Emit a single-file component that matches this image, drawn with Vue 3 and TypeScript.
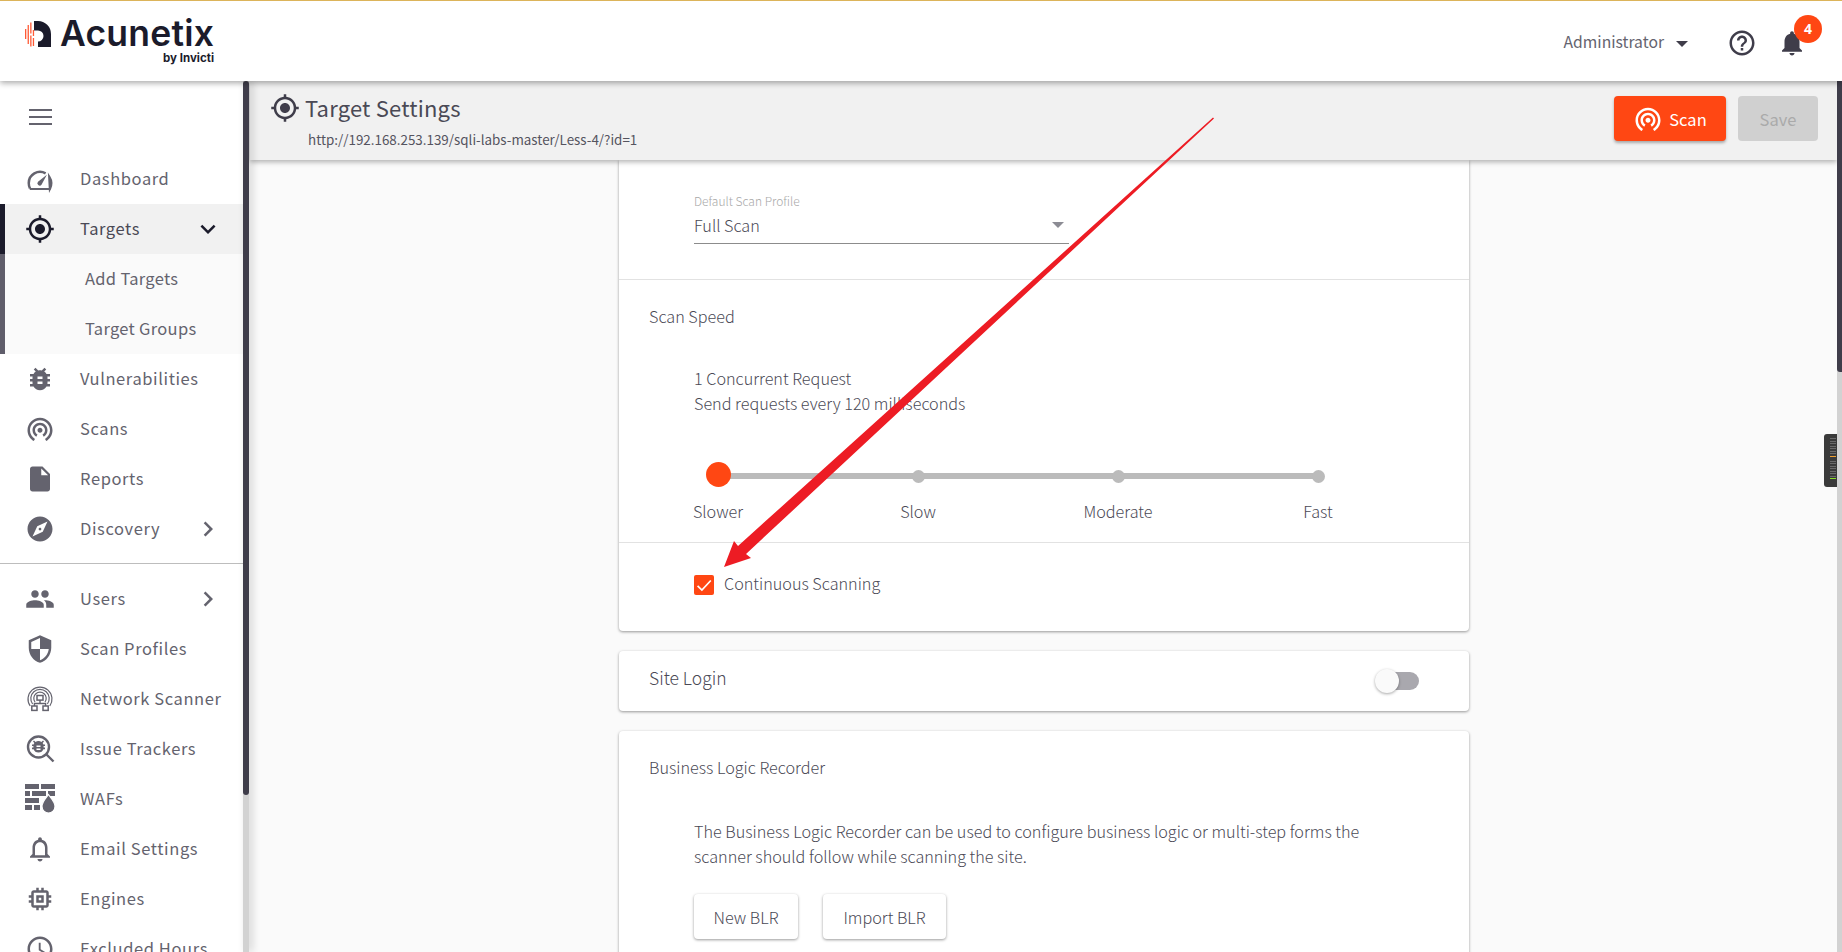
<script setup lang="ts">
interface NavItem { label: string; d?: string; custom?: string; chevron?: boolean }
const top: NavItem[] = [
  { label: 'Vulnerabilities', d: 'M14,12H10V10H14M14,16H10V14H14M20,8H17.19C16.74,7.22 16.12,6.55 15.37,6.04L17,4.41L15.59,3L13.42,5.17C12.96,5.06 12.5,5 12,5C11.5,5 11.04,5.06 10.59,5.17L8.41,3L7,4.41L8.62,6.04C7.88,6.55 7.26,7.22 6.81,8H4V10H6.09C6.04,10.33 6,10.66 6,11V12H4V14H6V15C6,15.34 6.04,15.67 6.09,16H4V18H6.81C7.85,19.79 9.78,21 12,21C14.22,21 16.15,19.79 17.19,18H20V16H17.91C17.96,15.67 18,15.34 18,15V14H20V12H18V11C18,10.66 17.96,10.33 17.91,10H20V8Z' },
  { label: 'Scans', d: 'M12 11c-1.1 0-2 .9-2 2s.9 2 2 2 2-.9 2-2-.9-2-2-2zm6 2c0-3.31-2.69-6-6-6s-6 2.69-6 6c0 2.22 1.21 4.15 3 5.19l1-1.74c-1.19-.7-2-1.97-2-3.45 0-2.21 1.79-4 4-4s4 1.79 4 4c0 1.48-.81 2.75-2 3.45l1 1.74c1.79-1.04 3-2.97 3-5.19zM12 3C6.48 3 2 7.48 2 13c0 3.7 2.01 6.92 4.99 8.65l1-1.73C5.61 18.53 4 15.96 4 13c0-4.42 3.58-8 8-8s8 3.58 8 8c0 2.96-1.61 5.53-4 6.92l1 1.73c2.99-1.73 5-4.95 5-8.65 0-5.52-4.48-10-10-10z' },
  { label: 'Reports', d: 'M6 2c-1.1 0-1.99.9-1.99 2L4 20c0 1.1.89 2 1.99 2H18c1.1 0 2-.9 2-2V8l-6-6H6zm7 7V3.5L18.5 9H13z' },
  { label: 'Discovery', chevron: true, d: 'M12 10.9c-.61 0-1.1.49-1.1 1.1s.49 1.1 1.1 1.1c.61 0 1.1-.49 1.1-1.1s-.49-1.1-1.1-1.1zM12 2C6.48 2 2 6.48 2 12s4.48 10 10 10 10-4.48 10-10S17.52 2 12 2zm2.19 12.19L6 18l3.81-8.19L18 6l-3.81 8.19z' }
]
const bottom: NavItem[] = [
  { label: 'Users', chevron: true, d: 'M16 11c1.66 0 2.99-1.34 2.99-3S17.66 5 16 5c-1.66 0-3 1.34-3 3s1.34 3 3 3zm-8 0c1.66 0 2.99-1.34 2.99-3S9.66 5 8 5C6.34 5 5 6.34 5 8s1.34 3 3 3zm0 2c-2.33 0-7 1.17-7 3.5V19h14v-2.5c0-2.33-4.67-3.5-7-3.5zm8 0c-.29 0-.62.02-.97.05 1.16.84 1.97 1.97 1.97 3.45V19h6v-2.5c0-2.33-4.67-3.5-7-3.5z' },
  { label: 'Scan Profiles', d: 'M12 1L3 5v6c0 5.55 3.84 10.74 9 12 5.16-1.26 9-6.45 9-12V5l-9-4zm0 10.99h7c-.53 4.12-3.28 7.79-7 8.94V12H5V6.3l7-3.11v8.8z' },
  { label: 'Network Scanner', custom: 'network' },
  { label: 'Issue Trackers', custom: 'issue' },
  { label: 'WAFs', custom: 'waf' },
  { label: 'Email Settings', d: 'M12 22c1.1 0 2-.9 2-2h-4c0 1.1.9 2 2 2zm6-6v-5c0-3.07-1.63-5.64-4.5-6.32V4c0-.83-.67-1.5-1.5-1.5s-1.5.67-1.5 1.5v.68C7.64 5.36 6 7.92 6 11v5l-2 2v1h16v-1l-2-2zm-2 1H8v-6c0-2.48 1.51-4.5 4-4.5s4 2.02 4 4.5v6z' },
  { label: 'Engines', d: 'M15 9H9v6h6V9zm-2 4h-2v-2h2v2zm8-2V9h-2V7c0-1.1-.9-2-2-2h-2V3h-2v2h-2V3H9v2H7c-1.1 0-2 .9-2 2v2H3v2h2v2H3v2h2v2c0 1.1.9 2 2 2h2v2h2v-2h2v2h2v-2h2c1.1 0 2-.9 2-2v-2h2v-2h-2v-2h2zm-4 6H7V7h10v10z' },
  { label: 'Excluded Hours', d: 'M11.99 2C6.47 2 2 6.48 2 12s4.47 10 9.99 10C17.52 22 22 17.52 22 12S17.52 2 11.99 2zM12 20c-4.42 0-8-3.58-8-8s3.58-8 8-8 8 3.58 8 8-3.58 8-8 8zm.5-13H11v6l5.25 3.15.75-1.23-4.5-2.67z' }
]
const gps = 'M12 8c-2.21 0-4 1.79-4 4s1.79 4 4 4 4-1.79 4-4-1.79-4-4-4zm8.94 3c-.46-4.17-3.77-7.48-7.94-7.94V1h-2v2.06C6.83 3.52 3.52 6.83 3.06 11H1v2h2.06c.46 4.17 3.77 7.48 7.94 7.94V23h2v-2.06c4.17-.46 7.48-3.77 7.94-7.94H23v-2h-2.06zM12 19c-3.87 0-7-3.13-7-7s3.13-7 7-7 7 3.13 7 7-3.13 7-7 7z'
const tether = top[1].d as string
const chevRight = 'M8.59 16.59L13.17 12 8.59 7.41 10 6l6 6-6 6z'
const chevDown = 'M7.41 8.59L12 13.17l4.59-4.58L18 10l-6 6-6-6z'
const stops = ['Slower', 'Slow', 'Moderate', 'Fast']
const meterTicks = 7
</script>

<template>
  <div class="app">
    <header class="header">
      <div class="logo">
        <svg class="logo-mark" viewBox="25 21 26 26">
          <g fill="#ff5a36">
            <rect x="25" y="29" width="1.3" height="10" />
            <rect x="27.6" y="25" width="1.3" height="19" />
            <rect x="30.2" y="22.5" width="1.3" height="11" />
            <rect x="30.2" y="35.5" width="1.3" height="11" />
            <rect x="32.8" y="30" width="1.3" height="6" />
            <rect x="32.8" y="38" width="1.3" height="8" />
          </g>
          <path fill="#1b1b2b" d="M34 21H38a13 13 0 0 1 13 13V47H38V41.5a5.5 5.5 0 0 0 0-11H34z" />
        </svg>
        <div class="logo-text">
          <span class="logo-name">Acunetix</span>
          <span class="logo-by">by Invicti</span>
        </div>
      </div>
      <div class="header-right">
        <span class="admin">Administrator</span>
        <span class="caret"></span>
        <svg class="help" viewBox="0 0 24 24"><path d="M11 18h2v-2h-2v2zm1-16C6.48 2 2 6.48 2 12s4.48 10 10 10 10-4.48 10-10S17.52 2 12 2zm0 18c-4.41 0-8-3.59-8-8s3.59-8 8-8 8 3.59 8 8-3.59 8-8 8zm0-14c-2.21 0-4 1.79-4 4h2c0-1.1.9-2 2-2s2 .9 2 2c0 2-3 1.75-3 5h2c0-2.25 3-2.5 3-5 0-2.21-1.79-4-4-4z" /></svg>
        <div class="bell">
          <svg viewBox="0 0 24 24"><path d="M12 22c1.1 0 2-.9 2-2h-4c0 1.1.89 2 2 2zm6-6v-5c0-3.07-1.64-5.64-4.5-6.32V4c0-.83-.67-1.5-1.5-1.5s-1.5.67-1.5 1.5v.68C7.63 5.36 6 7.92 6 11v5l-2 2v1h16v-1l-2-2z" /></svg>
          <span class="badge">4</span>
        </div>
      </div>
    </header>

    <div class="body">
      <aside class="sidebar">
        <div class="burger"><span></span><span></span><span></span></div>
        <div class="row">
          <svg class="icon" viewBox="0 0 24 24">
            <path d="M4 19.5a9.2 9.2 0 0 1-1-4.2a9 9 0 0 1 13.5-7.8M19.5 10.5a9 9 0 0 1 1.5 4.8a9.2 9.2 0 0 1-1 4.2z" fill="none" stroke="#64636e" stroke-width="2" />
            <path d="M3.8 20h16.4" stroke="#64636e" stroke-width="1.6" />
            <path d="M10.4 14.2L17.5 8.6L13.2 16.6a1.7 1.7 0 1 1-2.8-2.4z" fill="#64636e" />
          </svg>
          <span>Dashboard</span>
        </div>
        <div class="row row-active">
          <svg class="icon" viewBox="0 0 24 24"><path :d="gps" /></svg>
          <span>Targets</span>
          <svg class="chev" viewBox="0 0 24 24"><path :d="chevDown" /></svg>
        </div>
        <div class="sub">Add Targets</div>
        <div class="sub">Target Groups</div>
        <div v-for="n in top" :key="n.label" class="row">
          <svg class="icon" viewBox="0 0 24 24"><path :d="n.d" /></svg>
          <span>{{ n.label }}</span>
          <svg v-if="n.chevron" class="chev" viewBox="0 0 24 24"><path :d="chevRight" /></svg>
        </div>
        <div class="nav-divider"></div>
        <div v-for="n in bottom" :key="n.label" class="row">
          <svg v-if="n.custom === 'network'" class="icon" viewBox="0 0 30 30" fill="none" stroke="#64636e">
            <path d="M5.2 22a12 12 0 1 1 19.6 0M7.6 20a9.2 9.2 0 1 1 14.8 0M10 18a6.2 6.2 0 1 1 10 0" stroke-width="1.2" />
            <rect x="12" y="11.5" width="6" height="4.6" fill="#fff" stroke-width="1.5" />
            <rect x="6.8" y="22" width="5.2" height="4.4" fill="#fff" stroke-width="1.5" />
            <rect x="18" y="22" width="5.2" height="4.4" fill="#fff" stroke-width="1.5" />
            <path d="M15 16v3.5M9.4 22v-2.5h11.2v2.5" stroke-width="1.4" />
          </svg>
          <svg v-else-if="n.custom === 'issue'" class="icon" viewBox="0 0 30 30" fill="none" stroke="#64636e">
            <circle cx="13.5" cy="13" r="10.5" stroke-width="2.4" />
            <path d="M21.5 20.5l7 7" stroke-width="2.4" />
            <path fill="#64636e" stroke="none" fill-rule="evenodd" d="M13.5 7c1.1 0 2.1.4 2.9 1l1.6-1.5 1 1-1.4 1.4c.4.6.7 1.1.8 1.6H20v1.6h-1.4v1.5H20v1.6h-1.6c-.6 2-2.5 3.3-4.9 3.3s-4.3-1.3-4.9-3.3H7v-1.6h1.4v-1.5H7v-1.6h1.6c.1-.5.4-1 .8-1.6L8 7.5l1-1L10.6 8c.8-.6 1.8-1 2.9-1zM11.5 11.5v1.5h4v-1.5zm0 3v1.5h4v-1.5z" />
          </svg>
          <svg v-else-if="n.custom === 'waf'" class="icon" viewBox="0 0 30 30" fill="#64636e">
            <rect x="0" y="0" width="14" height="5" />
            <rect x="16" y="0" width="14" height="5" />
            <rect x="0" y="7" width="5" height="5" />
            <rect x="7" y="7" width="14" height="5" />
            <rect x="23" y="7" width="7" height="5" />
            <rect x="0" y="14" width="14" height="5" />
            <rect x="0" y="21" width="7" height="5" />
            <rect x="9" y="21" width="6" height="5" />
            <path d="M23.5 10.5c2.4 3.6 6.5 7 6.5 12a6.5 6.5 0 0 1-13 0c0-5 4-8.400 6.500-12z" stroke="#fff" stroke-width="1.2" />
          </svg>
          <svg v-else class="icon" viewBox="0 0 24 24"><path :d="n.d" /></svg>
          <span>{{ n.label }}</span>
          <svg v-if="n.chevron" class="chev" viewBox="0 0 24 24"><path :d="chevRight" /></svg>
        </div>
      </aside>
      <div class="side-track"><div class="side-thumb"></div></div>

      <main class="main">
        <div class="pagebar">
          <div class="pagebar-title">
            <div class="title-line">
              <svg class="title-icon" viewBox="0 0 24 24"><path :d="gps" /></svg>
              <h1>Target Settings</h1>
            </div>
            <div class="url">http://192.168.253.139/sqli-labs-master/Less-4/?id=1</div>
          </div>
          <div class="actions">
            <button class="btn-scan">
              <svg viewBox="0 0 24 24"><path :d="tether" /></svg>
              <span>Scan</span>
            </button>
            <button class="btn-save">Save</button>
          </div>
        </div>

        <div class="content">
          <section class="card card-first">
            <div class="sec sec-profile">
              <div class="field-label">Default Scan Profile</div>
              <div class="select">
                <span>Full Scan</span>
                <span class="select-caret"></span>
              </div>
            </div>
            <div class="sec sec-speed">
              <div class="card-title">Scan Speed</div>
              <p class="speed-text">1 Concurrent Request<br />Send requests every 120 milliseconds</p>
              <div class="slider">
                <div v-for="(s, i) in stops" :key="s" class="stop">
                  <div class="stop-slot"><span :class="i === 0 ? 'knob' : 'dot'"></span></div>
                  <div class="stop-label">{{ s }}</div>
                </div>
              </div>
            </div>
            <div class="sec-check">
              <span class="checkbox">
                <svg viewBox="0 0 20 20"><path d="M3.6 10.8l4.3 4.3 8.900-9.600" fill="none" stroke="#fff" stroke-width="1.7" /></svg>
              </span>
              <span class="check-label">Continuous Scanning</span>
            </div>
          </section>

          <section class="card card-login">
            <div class="card-title">Site Login</div>
            <div class="toggle"><span class="toggle-knob"></span></div>
          </section>

          <section class="card card-blr">
            <div class="card-title">Business Logic Recorder</div>
            <p class="blr-text">The Business Logic Recorder can be used to configure business logic or multi-step forms the scanner should follow while scanning the site.</p>
            <div class="blr-buttons">
              <button class="btn-plain btn-new">New BLR</button>
              <button class="btn-plain btn-import">Import BLR</button>
            </div>
          </section>
        </div>
      </main>
      <div class="page-track"><div class="page-thumb"></div></div>
    </div>

    <div class="meter">
      <div class="meter-col">
        <span v-for="t in meterTicks" :key="'a' + t" class="tick"></span>
        <span class="tick tick-orange"></span>
      </div>
      <div class="meter-col">
        <span v-for="t in meterTicks" :key="'b' + t" class="tick"></span>
        <span class="tick tick-green"></span>
      </div>
    </div>

    <svg class="annotation" viewBox="0 0 1842 952">
      <polygon fill="#ed1c24" points="1213,117.500 1214,118.500 746,554 751,558 724,567 734,541 738,546" />
    </svg>
  </div>
</template>

<style>
html, body { margin: 0; padding: 0; overflow: hidden; }
</style>

<style scoped>
.app {
  position: relative;
  width: 1842px;
  height: 952px;
  overflow: hidden;
  background: #fafafa;
  font-family: "Noto Sans CJK SC", "Noto Sans", sans-serif;
  color: #4a4955;
}
svg { display: block; flex: none; }

.header {
  position: relative;
  z-index: 5;
  height: 80px;
  border-top: 1px solid #dcb45a;
  background: #fff;
  box-shadow: 0 2px 6px rgba(0, 0, 0, 0.35);
  display: flex;
  align-items: flex-start;
  justify-content: space-between;
}
.logo { display: flex; padding: 20px 0 0 25px; }
.logo-mark { width: 26px; height: 26px; }
.logo-text { display: flex; flex-direction: column; align-items: flex-end; margin-left: 9px; }
.logo-name {
  font-family: Inter, sans-serif;
  font-weight: 600;
  font-size: 35.5px;
  line-height: 26px;
  color: #1b1b2b;
  letter-spacing: 0.2px;
}
.logo-by {
  font-family: Inter, sans-serif;
  font-weight: 700;
  font-size: 11.5px;
  line-height: 14px;
  color: #1b1b2b;
  margin-top: 4px;
}
.header-right { display: flex; align-items: center; height: 84px; margin-top: -1px; }
.admin { font-size: 15.7px; line-height: 25px; color: #64636e; margin-top: -1px; }
.caret {
  width: 0; height: 0;
  border-left: 6.5px solid transparent;
  border-right: 6.5px solid transparent;
  border-top: 6px solid #3f3d4a;
  margin: 4px 0 0 12px;
}
.help { width: 30px; height: 30px; margin: 2px 0 0 39px; fill: #3f3d4a; }
.bell { position: relative; width: 30px; height: 30px; margin: 2px 35px 0 20px; fill: #3f3d4a; }
.bell svg { width: 30px; height: 30px; }
.badge {
  position: absolute;
  left: 17px;
  top: -13px;
  width: 28px;
  height: 28px;
  border-radius: 50%;
  background: #ff4713;
  color: #fff;
  font-size: 14px;
  font-weight: 700;
  font-family: "Noto Sans", sans-serif;
  line-height: 28px;
  text-align: center;
}

.body { display: flex; height: 871px; }
.sidebar { width: 243px; flex: none; background: #fff; overflow: hidden; }
.burger {
  height: 73px;
  box-sizing: border-box;
  padding: 28px 0 0 29px;
  display: flex;
  flex-direction: column;
  gap: 5px;
}
.burger span { width: 23px; height: 2px; background: #64636e; }
.row {
  height: 50px;
  display: flex;
  align-items: center;
  padding: 0 20px 0 25px;
  font-size: 16.5px;
  letter-spacing: 0.6px;
  color: #64636e;
  fill: #64636e;
}
.row > span { margin: -2px 0 0 25px; line-height: 25px; white-space: nowrap; }
.icon { width: 30px; height: 30px; }
.chev { width: 30px; height: 30px; margin-left: auto; }
.row-active {
  background: #f1f1f1;
  color: #4a4955;
  fill: #1b1b2b;
  box-shadow: inset 5px 0 0 #1b1b2b;
}
.sub {
  height: 50px;
  line-height: 48px;
  padding-left: 85px;
  background: #fafafa;
  font-size: 16.5px;
  letter-spacing: 0.3px;
  color: #64636e;
  box-shadow: inset 5px 0 0 #5f5d6a;
}
.nav-divider { height: 1px; background: #bdbdbd; margin: 9px 0 10px; }

.side-track {
  position: relative;
  z-index: 3;
  width: 6px;
  flex: none;
  background: #d2d2d2;
  box-shadow: 3px 0 8px rgba(0, 0, 0, 0.18);
}
.side-thumb { height: 714px; background: #3f3d4a; border-radius: 3px; }

.main { flex: 1; min-width: 0; overflow: hidden; display: flex; flex-direction: column; }
.pagebar {
  position: relative;
  z-index: 2;
  flex: none;
  height: 79px;
  margin-left: 1px;
  background: #f1f1f1;
  box-shadow: 0 2px 5px rgba(0, 0, 0, 0.3);
  display: flex;
  justify-content: space-between;
}
.pagebar-title { padding: 11px 0 0 20px; }
.title-line { display: flex; align-items: center; height: 30px; }
.title-icon { width: 30px; height: 30px; fill: #3f3d4a; margin-top: 1px; }
.pagebar h1 {
  margin: -1px 0 0 5px;
  font-size: 22px;
  font-weight: 400;
  line-height: 30px;
  color: #4a4955;
  letter-spacing: 0.2px;
}
.url { margin: 7px 0 0 38px; font-size: 13.4px; line-height: 20px; color: #55545f; }
.actions { display: flex; align-items: flex-start; gap: 12px; padding: 15px 19px 0 0; }
.btn-scan, .btn-save {
  height: 45px;
  border: 0;
  border-radius: 4px;
  font-family: inherit;
  font-size: 16.5px;
  padding: 0;
}
.btn-scan {
  width: 112px;
  background: #ff4713;
  color: #fff;
  fill: #fff;
  display: flex;
  align-items: center;
  justify-content: center;
  gap: 6px;
  box-shadow: 0 2px 3px rgba(0, 0, 0, 0.3);
}
.btn-scan svg { width: 30px; height: 30px; }
.btn-save { width: 80px; background: #d0d0d0; color: #aaa; }

.content { flex: 1; min-height: 0; overflow: hidden; padding-left: 370px; }
.card {
  width: 850px;
  background: #fff;
  border-radius: 4px;
  box-shadow: 0 1px 3px rgba(0, 0, 0, 0.4);
  margin-bottom: 20px;
  font-size: 16.2px;
  font-weight: 300;
  line-height: 25px;
  box-sizing: border-box;
}
.card-first { border-radius: 0 0 4px 4px; height: 471px; }
.card-title { padding-left: 30px; margin-top: -1px; }
.sec { border-bottom: 1px solid #e2e2e2; }
.sec-profile { padding-left: 75px; padding-top: 33px; height: 86px; }
.field-label { font-size: 12px; line-height: 16px; color: #a8a8a8; }
.select {
  width: 375px;
  height: 31px;
  box-sizing: border-box;
  margin-top: 4px;
  border-bottom: 1px solid #8c8c8c;
  display: flex;
  justify-content: space-between;
}
.select-caret {
  width: 0; height: 0;
  border-left: 6.5px solid transparent;
  border-right: 6.5px solid transparent;
  border-top: 6px solid #8c8c94;
  margin: 9px 5px 0 0;
}
.sec-speed { padding-top: 25px; height: 237px; }
.speed-text { margin: 37px 0 0 75px; }
.slider {
  width: 600px;
  margin: 48px 0 0 99px;
  display: flex;
  justify-content: space-between;
  background: linear-gradient(#bbb, #bbb) no-repeat 0 9px / 100% 6px;
}
.stop { width: 0; display: flex; flex-direction: column; align-items: center; }
.stop-slot { height: 25px; display: flex; align-items: center; justify-content: center; }
.dot { flex: none; width: 13px; height: 13px; border-radius: 50%; background: #bbb; }
.knob { flex: none; width: 25px; height: 25px; border-radius: 50%; background: #ff4713; margin-top: -5px; }
.stop-label { margin-top: 10px; white-space: nowrap; }
.sec-check { display: flex; align-items: center; gap: 10px; padding: 31px 0 0 75px; }
.check-label { margin-top: -3px; }
.checkbox { width: 20px; height: 20px; border-radius: 2px; background: #ff4713; flex: none; }

.card-login {
  height: 60px;
  padding: 15px 0 0;
  display: flex;
  justify-content: space-between;
  font-size: 17.5px;
}
.toggle {
  position: relative;
  width: 40px;
  height: 18px;
  margin: 6px 50px 0 0;
  border-radius: 9px;
  background: #a9a8ae;
}
.toggle-knob {
  position: absolute;
  left: -4px;
  top: -3px;
  width: 24px;
  height: 24px;
  border-radius: 50%;
  background: #fafafa;
  box-shadow: 0 1px 3px rgba(0, 0, 0, 0.35);
}
.card-blr { height: 400px; padding-top: 25px; }
.blr-text { margin: 39px 0 0 75px; width: 690px; }
.blr-buttons { display: flex; gap: 25px; margin: 25px 0 0 75px; }
.btn-plain {
  height: 45px;
  border: 0;
  border-radius: 4px;
  background: #fff;
  font-family: inherit;
  font-size: 16.2px;
  font-weight: 300;
  color: #4a4955;
  padding: 0;
  box-shadow: 0 1px 3px rgba(0, 0, 0, 0.4);
}
.btn-new { width: 104px; }
.btn-import { width: 123px; }

.page-track { width: 5px; flex: none; background: #d2d2d2; }
.page-thumb { height: 294px; margin-top: -3px; background: #3f3d4a; border-radius: 3px 0 0 3px; }

.meter {
  position: absolute;
  z-index: 6;
  left: 1824px;
  top: 434px;
  width: 13px;
  height: 53px;
  box-sizing: border-box;
  padding: 4px 1px 0 6px;
  background: #3a3a3a;
  border-radius: 3px 0 0 3px;
}
.meter-col { display: flex; flex-direction: column; gap: 1.5px; margin-bottom: 4px; }
.tick { height: 1px; background: #6a6a6a; }
.tick-orange { background: #f0a030; }
.tick-green { background: #8adf2a; }

.annotation { position: absolute; z-index: 10; left: 0; top: 0; width: 1842px; height: 952px; pointer-events: none; }
</style>
